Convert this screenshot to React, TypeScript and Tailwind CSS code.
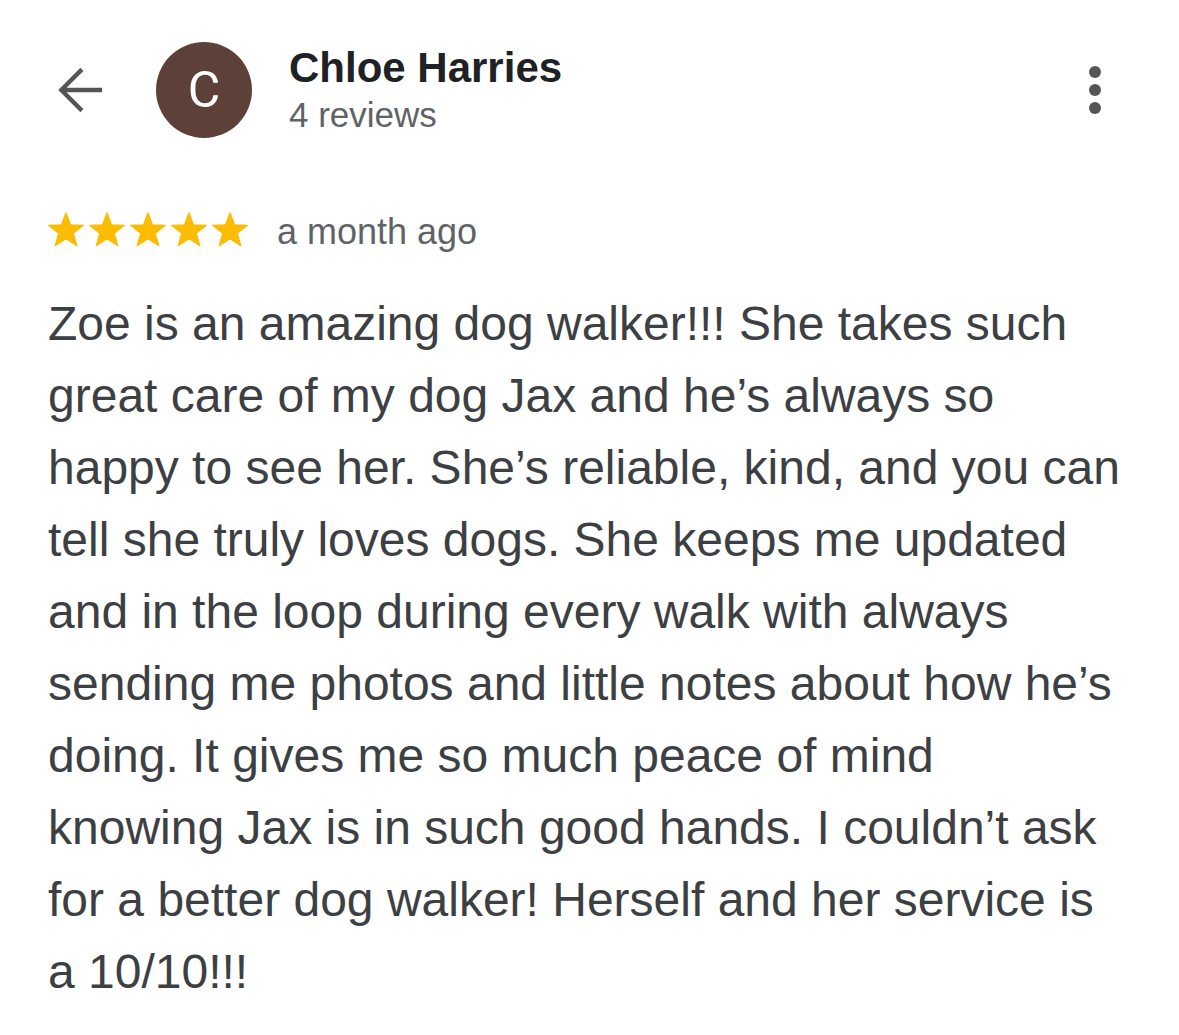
import React from 'react';

function Star() {
  return (
    <svg viewBox="0 0 36 34" className="w-[36px] h-[34px]" fill="#fbbc04">
      <path
        d="M18 0.8 L22.5 12.8 L35.4 13.3 L25.3 21.4 L28.8 33.6 L18 26.7 L7.2 33.6 L10.7 21.4 L0.6 13.3 L13.5 12.8 Z"
        strokeLinejoin="round"
        stroke="#fbbc04"
        strokeWidth="1.2"
      />
    </svg>
  );
}

export default function App() {
  return (
    <div className="w-[1179px] h-[1035px] bg-white overflow-hidden font-['Liberation_Sans',Arial,sans-serif]">
      <div className="flex items-center pt-[42px] pl-[56px] pr-[78px]">
        <svg viewBox="0 0 50 50" className="w-[48px] h-[50px]" fill="none" stroke="#555555" strokeWidth="4.5">
          <path d="M48 25 H6 M27 3.5 L5.5 25 L27 46.5" />
        </svg>
        <div className="ml-[52px] w-[96px] h-[96px] rounded-full bg-[#5d4037] flex items-center justify-center">
          <span className="text-white text-[50px] font-['Roboto',sans-serif] leading-none">C</span>
        </div>
        <div className="ml-[37px] flex flex-col gap-[3px] -mt-[2px]">
          <span className="text-[#202124] text-[42px] font-bold leading-[48px]">Chloe Harries</span>
          <span className="text-[#5f6368] text-[35px] leading-[40px]">4 reviews</span>
        </div>
        <div className="ml-auto flex flex-col gap-[6px] items-center -mt-[1px]">
          <span className="w-[12px] h-[12px] rounded-full bg-[#555555]" />
          <span className="w-[12px] h-[12px] rounded-full bg-[#555555]" />
          <span className="w-[12px] h-[12px] rounded-full bg-[#555555]" />
        </div>
      </div>

      <div className="flex items-center mt-[74px] pl-[48px]">
        <div className="flex gap-[5px] mb-[6px]">
          <Star />
          <Star />
          <Star />
          <Star />
          <Star />
        </div>
        <span className="ml-[29px] text-[#5f6368] text-[36px] leading-[40px]">a month ago</span>
      </div>

      <p className="mt-[36px] pl-[48px] pr-[59px] text-[#3c4043] text-[48px] leading-[72px]">
        Zoe is an amazing dog walker!!! She takes such great care of my dog Jax and he’s always so happy to see her. She’s reliable, kind, and you can tell she truly loves dogs. She keeps me updated and in the loop during every walk with always sending me photos and little notes about how he’s doing. It gives me so much peace of mind knowing Jax is in such good hands. I couldn’t ask for a better dog walker! Herself and her service is a 10/10!!!
      </p>
    </div>
  );
}
